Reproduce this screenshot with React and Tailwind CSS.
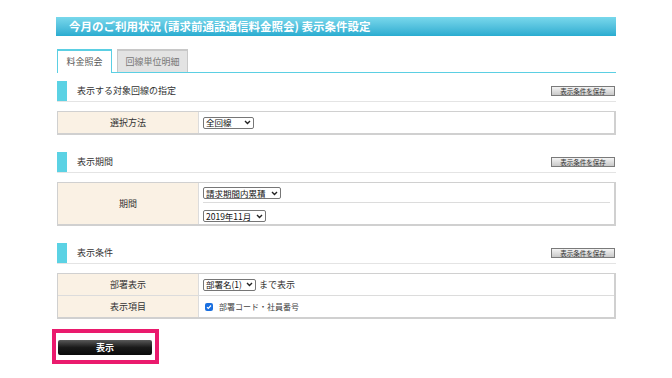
import React from 'react';

const font = { fontFamily: '"Noto Sans CJK JP", "Noto Sans", sans-serif' };

const Chevron = () => (
  <svg width="7" height="5" viewBox="0 0 7 5" className="ml-[3px] shrink-0">
    <path d="M1 1l2.5 2.5L6 1" fill="none" stroke="#222" strokeWidth="1.4" />
  </svg>
);

const Select = ({ label, width }) => (
  <div
    className={`flex items-center justify-between h-[12px] px-[2px] border border-[#767676] rounded-[2px] bg-white text-[8.5px] leading-none whitespace-nowrap text-[#111] ${width}`}
  >
    <span>{label}</span>
    <Chevron />
  </div>
);

const SaveButton = () => (
  <div className="h-[10px] w-[64px] flex items-center justify-center border border-[#7a7a7a] bg-linear-to-b from-[#f4f4f4] to-[#c9c9c9] text-[6.5px] leading-none whitespace-nowrap text-[#333]">
    表示条件を保存
  </div>
);

const SectionHeader = ({ title }) => (
  <div className="flex items-center justify-between h-[21px] border-b border-[#e4e4e4]">
    <div className="flex items-center h-full">
      <div className="w-[10px] h-full bg-[#5bd2e4]" />
      <span className="ml-[10px] text-[9px] text-[#333]">{title}</span>
    </div>
    <div className="pr-[1px]">
      <SaveButton />
    </div>
  </div>
);

const Row = ({ label, children, last, height = 'h-[21px]' }) => (
  <div className={`flex ${last ? '' : 'border-b border-[#dcdcdc]'}`}>
    <div className={`w-[141px] shrink-0 flex items-center justify-center bg-[#faf1e4] border-r border-[#dcdcdc] text-[9px] text-[#333] ${height}`}>
      {label}
    </div>
    <div className={`flex-1 bg-white leading-none ${height}`}>{children}</div>
  </div>
);

export default function App() {
  return (
    <div className="w-[672px] h-[378px] bg-white overflow-hidden" style={font}>
      <div className="pl-[56px] pt-[17px] w-[616px]">
        {/* Title */}
        <div className="h-[19px] bg-linear-to-b from-[#78d8ec] to-[#28acd0] flex items-center pl-[13px]">
          <span className="text-white text-[11.5px] font-bold leading-none whitespace-nowrap">
            今月のご利用状況 (請求前通話通信料金照会) 表示条件設定
          </span>
        </div>

        <div className="pl-[1px]">
          {/* Tabs */}
          <div className="mt-[12px] flex items-end gap-[5px] border-b border-[#5bcfe3] h-[25px]">
            <div className="w-[55px] h-[24px] -mb-px bg-white border-t-2 border-x border-[#5bcfe3] flex items-center justify-center text-[9px] text-[#555]">
              料金照会
            </div>
            <div className="w-[71px] h-[23px] bg-[#e3e3e3] border-t-2 border-x border-[#c8c8c8] flex items-center justify-center text-[9px] text-[#777]">
              回線単位明細
            </div>
          </div>

          {/* Section 1 */}
          <div className="mt-[8px]">
            <SectionHeader title="表示する対象回線の指定" />
          </div>
          <div className="mt-[9px] border border-[#d0d0d0] border-r-2 border-b-2">
            <Row label="選択方法" last>
              <div className="h-full flex items-center pl-[4px]">
                <Select label="全回線" width="w-[51px]" />
              </div>
            </Row>
          </div>

          {/* Section 2 */}
          <div className="mt-[17px]">
            <SectionHeader title="表示期間" />
          </div>
          <div className="mt-[9px] border border-[#d0d0d0] border-r-2 border-b-2">
            <Row label="期間" last height="h-[41px]">
              <div className="flex flex-col items-start px-[4px] pt-[4px]">
                <Select label="請求期間内累積" width="w-[78px]" />
                <div className="self-stretch mt-[3px] border-b border-[#dcdcdc]" />
                <div className="mt-[7px]">
                  <Select label="2019年11月" width="w-[63px]" />
                </div>
              </div>
            </Row>
          </div>

          {/* Section 3 */}
          <div className="mt-[17px]">
            <SectionHeader title="表示条件" />
          </div>
          <div className="mt-[9px] border border-[#d0d0d0] border-r-2 border-b-2">
            <Row label="部署表示">
              <div className="h-full flex items-center pl-[4px] gap-[3px]">
                <Select label="部署名(1)" width="w-[53px]" />
                <span className="text-[9px] text-[#333] whitespace-nowrap">まで表示</span>
              </div>
            </Row>
            <Row label="表示項目" last>
              <div className="h-full flex items-center pl-[6px] gap-[6px]">
                <div className="w-[8px] h-[8px] rounded-[2px] bg-[#1a6fe0] flex items-center justify-center">
                  <svg width="6" height="6" viewBox="0 0 6 6">
                    <path d="M1 3.2l1.3 1.3L5 1.5" fill="none" stroke="white" strokeWidth="1.2" />
                  </svg>
                </div>
                <span className="text-[8px] text-[#444] whitespace-nowrap">部署コード・社員番号</span>
              </div>
            </Row>
          </div>
        </div>

        {/* Submit */}
        <div className="mt-[10px] -ml-[4px] w-[107px] h-[35px] border-4 border-[#ea1a6d] pl-[2px] pt-[7px]">
          <div className="w-[94px] h-[15px] rounded-[2px] bg-linear-to-b from-[#5a5a5a] via-[#1a1a1a] to-[#0a0a0a] flex items-center justify-center text-white text-[9px] font-bold">
            表示
          </div>
        </div>
      </div>
    </div>
  );
}
